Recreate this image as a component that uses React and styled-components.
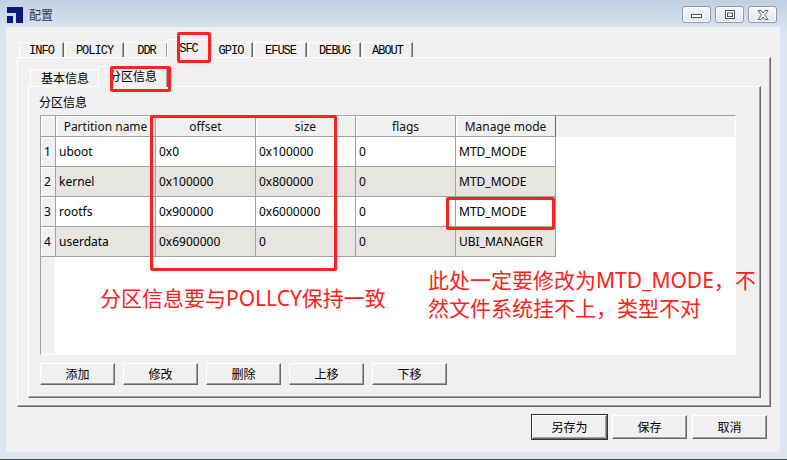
import styled, { createGlobalStyle } from "styled-components";

const GlobalStyle = createGlobalStyle`
  html, body {
    margin: 0;
    padding: 0;
    background: #dbe6f2;
  }
  * {
    box-sizing: border-box;
  }
`;

const UI_FONT = `"Noto Sans", "Noto Sans CJK SC", sans-serif`;

const Window = styled.div`
  position: relative;
  width: 787px;
  height: 460px;
  display: flex;
  flex-direction: column;
  background: linear-gradient(to bottom, #c2d1e0 0px, #d6e2ee 27px, #dbe6f2 40px);
  border-bottom: 1px solid #4a4a4a;
  font-family: ${UI_FONT};
  font-size: 12px;
  color: #000;
`;

const TitleBar = styled.div`
  height: 27px;
  flex: none;
  display: flex;
  align-items: center;
  padding: 2px 10px 0 7px;
  gap: 6px;
`;

const Title = styled.div`
  flex: 1;
  font-size: 12px;
  color: #2a3a4c;
`;

const CaptionButtons = styled.div`
  display: flex;
  gap: 4px;
`;

const CaptionButton = styled.div`
  width: 29px;
  height: 17px;
  border: 1px solid #8c9bb0;
  border-radius: 3px;
  background: linear-gradient(to bottom, #f5f8fb, #dfe7f0);
  display: flex;
  align-items: center;
  justify-content: center;
  box-shadow: inset 0 0 0 1px rgba(255, 255, 255, 0.7);
`;

const Client = styled.div`
  flex: 1;
  margin: 0 7px 7px 6px;
  background: #f0f0f0;
  display: flex;
  flex-direction: column;
  padding: 12px 9px 0 11px;
`;

const TabStrip = styled.div`
  height: 18px;
  display: flex;
  align-items: flex-end;
  padding-left: 2px;
  position: relative;
  z-index: 1;
`;

const OuterTab = styled.div`
  width: ${(p) => p.$w}px;
  height: ${(p) => (p.$active ? 19 : 15)}px;
  margin-bottom: ${(p) => (p.$active ? -1 : 0)}px;
  margin-left: ${(p) => (p.$active ? -2 : 0)}px;
  margin-right: ${(p) => (p.$active ? -1 : 1)}px;
  background: #f0f0f0;
  border-top: 1px solid #fff;
  border-left: 1px solid #fff;
  border-right: 1px solid #696969;
  box-shadow: inset -1px 0 0 #a0a0a0;
  display: flex;
  align-items: center;
  justify-content: center;
  padding-top: ${(p) => (p.$active ? 0 : 1)}px;
  font-family: "Liberation Mono", monospace;
  font-size: 12px;
  letter-spacing: -1px;
  color: #000;
`;

const OuterPanel = styled.div`
  height: 350px;
  background: #f0f0f0;
  border-top: 1px solid #fff;
  border-left: 1px solid #fff;
  border-right: 1px solid #696969;
  border-bottom: 1px solid #696969;
  box-shadow: inset -1px -1px 0 #a0a0a0;
  padding: 7px 9px 0 10px;
  display: flex;
  flex-direction: column;
`;

const InnerTabStrip = styled.div`
  height: 21px;
  display: flex;
  align-items: flex-end;
  padding-left: 2px;
  position: relative;
  z-index: 1;
`;

const InnerTab = styled.div`
  width: ${(p) => p.$w}px;
  height: ${(p) => (p.$active ? 21 : 17)}px;
  margin-bottom: ${(p) => (p.$active ? -1 : 0)}px;
  margin-left: ${(p) => (p.$active ? -2 : 0)}px;
  background: #f0f0f0;
  border-top: 1px solid #fff;
  border-left: 1px solid #fff;
  border-right: 1px solid #696969;
  box-shadow: inset -1px 0 0 #a0a0a0;
  display: flex;
  align-items: center;
  justify-content: center;
  padding-bottom: ${(p) => (p.$active ? 2 : 0)}px;
  font-size: 12px;
`;

const InnerPanel = styled.div`
  height: 312px;
  background: #f0f0f0;
  border-top: 1px solid #fff;
  border-left: 1px solid #fff;
  border-right: 1px solid #696969;
  border-bottom: 1px solid #696969;
  box-shadow: inset -1px -1px 0 #a0a0a0;
  padding: 8px 24px 0 11px;
  display: flex;
  flex-direction: column;
`;

const GroupLabel = styled.div`
  height: 16px;
  line-height: 16px;
  margin: 0 0 4px -1px;
  font-size: 12px;
`;

const Table = styled.div`
  height: 240px;
  border-top: 1px solid #a0a0a0;
  border-left: 1px solid #a0a0a0;
  border-right: 1px solid #fff;
  border-bottom: 1px solid #fff;
  background: linear-gradient(to right, #f0f0f0 14px, #fff 14px);
  display: flex;
  flex-direction: column;
`;

const Row = styled.div`
  display: grid;
  grid-template-columns: 15px 100px 100px 100px 100px 100px 1fr;
  height: ${(p) => (p.$header ? 21 : 30)}px;
  background: ${(p) => (p.$header ? "#f0f0f0" : "transparent")};
`;

const HeadCell = styled.div`
  border-right: 1px solid ${(p) => (p.$last ? "#696969" : "#a0a0a0")};
  border-bottom: 1px solid #a0a0a0;
  box-shadow: inset 1px 1px 0 #fff;
  display: flex;
  align-items: center;
  justify-content: center;
  font-size: 12px;
  color: #111;
  white-space: nowrap;
`;

const RowHead = styled.div`
  background: #f0f0f0;
  border-right: 1px solid #a0a0a0;
  border-bottom: 1px solid #a0a0a0;
  box-shadow: inset 1px 1px 0 #fff;
  display: flex;
  align-items: center;
  padding-left: 3px;
  font-size: 12px;
`;

const Cell = styled.div`
  background: ${(p) => (p.$alt ? "#e7e5e1" : "#fff")};
  border-right: 1px solid #a0a0a0;
  border-bottom: 1px solid #a0a0a0;
  display: flex;
  align-items: center;
  padding-left: 3px;
  font-size: 12px;
  white-space: nowrap;
`;

const ButtonRow = styled.div`
  display: flex;
  gap: ${(p) => p.$gap}px;
  margin-top: 8px;
  justify-content: ${(p) => (p.$right ? "flex-end" : "flex-start")};
  padding-right: ${(p) => (p.$right ? 4 : 0)}px;
`;

const Button = styled.div`
  width: ${(p) => p.$w}px;
  height: ${(p) => p.$h}px;
  background: #f0f0f0;
  border-top: 1px solid #fff;
  border-left: 1px solid #fff;
  border-right: 1px solid #696969;
  border-bottom: 1px solid #696969;
  box-shadow: inset -1px -1px 0 #a0a0a0;
  outline: ${(p) => (p.$default ? "1px solid #333" : "none")};
  outline-offset: 0;
  display: flex;
  align-items: center;
  justify-content: center;
  font-size: 12px;
`;

const RedBox = styled.div`
  position: absolute;
  left: ${(p) => p.$x}px;
  top: ${(p) => p.$y}px;
  width: ${(p) => p.$w}px;
  height: ${(p) => p.$h}px;
  border: 3px solid #ff2020;
  border-radius: 2px;
  pointer-events: none;
  z-index: 5;
`;

const Note = styled.div`
  position: absolute;
  left: ${(p) => p.$x}px;
  top: ${(p) => p.$y}px;
  font-family: "Noto Sans", "Noto Sans CJK SC", sans-serif;
  font-size: 21px;
  line-height: 28px;
  color: #ff2020;
  white-space: nowrap;
  z-index: 5;
`;

const outerTabs = [
  { name: "INFO", w: 45 },
  { name: "POLICY", w: 59 },
  { name: "DDR", w: 43 },
  { name: "SFC", w: 43, active: true },
  { name: "GPIO", w: 44 },
  { name: "EFUSE", w: 53 },
  { name: "DEBUG", w: 53 },
  { name: "ABOUT", w: 51 },
];

const partitions = [
  { name: "uboot", offset: "0x0", size: "0x100000", flags: "0", mode: "MTD_MODE" },
  { name: "kernel", offset: "0x100000", size: "0x800000", flags: "0", mode: "MTD_MODE" },
  { name: "rootfs", offset: "0x900000", size: "0x6000000", flags: "0", mode: "MTD_MODE" },
  { name: "userdata", offset: "0x6900000", size: "0", flags: "0", mode: "UBI_MANAGER" },
];

const AppIcon = () => (
  <svg width="16" height="16" viewBox="0 0 16 16">
    <rect x="0" y="0" width="16" height="6" fill="#0a1a7a" />
    <rect x="9" y="0" width="7" height="16" fill="#0a1a7a" />
    <rect x="0" y="9" width="6" height="7" fill="#0a1a7a" />
  </svg>
);

const MinIcon = () => (
  <svg width="11" height="8" viewBox="0 0 11 8">
    <rect x="0.5" y="3.5" width="10" height="3" fill="#fff" stroke="#4a5566" />
  </svg>
);

const MaxIcon = () => (
  <svg width="10" height="9" viewBox="0 0 10 9">
    <rect x="0.5" y="0.5" width="9" height="8" fill="#fff" stroke="#4a5566" />
    <rect x="2.5" y="3" width="5" height="3.5" fill="none" stroke="#4a5566" />
  </svg>
);

const CloseIcon = () => (
  <svg width="12" height="10" viewBox="0 0 12 10">
    <path
      d="M1 0.5 L4 0.5 L6 3 L8 0.5 L11 0.5 L7.6 5 L11 9.5 L8 9.5 L6 7 L4 9.5 L1 9.5 L4.4 5 Z"
      fill="#fff"
      stroke="#4a5566"
      strokeWidth="0.9"
      strokeLinejoin="round"
    />
  </svg>
);

const App = () => {
  return (
    <>
      <GlobalStyle />
      <Window>
        <TitleBar>
          <AppIcon />
          <Title>配置</Title>
          <CaptionButtons>
            <CaptionButton>
              <MinIcon />
            </CaptionButton>
            <CaptionButton>
              <MaxIcon />
            </CaptionButton>
            <CaptionButton>
              <CloseIcon />
            </CaptionButton>
          </CaptionButtons>
        </TitleBar>

        <Client>
          <TabStrip>
            {outerTabs.map((t) => (
              <OuterTab key={t.name} $w={t.w} $active={t.active}>
                {t.name}
              </OuterTab>
            ))}
          </TabStrip>

          <OuterPanel>
            <InnerTabStrip>
              <InnerTab $w={70}>基本信息</InnerTab>
              <InnerTab $w={70} $active>
                分区信息
              </InnerTab>
            </InnerTabStrip>

            <InnerPanel>
              <GroupLabel>分区信息</GroupLabel>
              <Table>
                <Row $header>
                  <HeadCell />
                  <HeadCell>Partition name</HeadCell>
                  <HeadCell>offset</HeadCell>
                  <HeadCell>size</HeadCell>
                  <HeadCell>flags</HeadCell>
                  <HeadCell $last>Manage mode</HeadCell>
                  <div />
                </Row>
                {partitions.map((p, i) => {
                  const alt = i % 2 === 1;
                  return (
                    <Row key={p.name}>
                      <RowHead>{i + 1}</RowHead>
                      <Cell $alt={alt}>{p.name}</Cell>
                      <Cell $alt={alt}>{p.offset}</Cell>
                      <Cell $alt={alt}>{p.size}</Cell>
                      <Cell $alt={alt}>{p.flags}</Cell>
                      <Cell $alt={alt}>{p.mode}</Cell>
                      <div />
                    </Row>
                  );
                })}
              </Table>

              <ButtonRow $gap={8}>
                {["添加", "修改", "删除", "上移", "下移"].map((label) => (
                  <Button key={label} $w={75} $h={22}>
                    {label}
                  </Button>
                ))}
              </ButtonRow>
            </InnerPanel>
          </OuterPanel>

          <ButtonRow $gap={5} $right>
            <Button $w={75} $h={24} $default>
              另存为
            </Button>
            <Button $w={75} $h={24}>
              保存
            </Button>
            <Button $w={75} $h={24}>
              取消
            </Button>
          </ButtonRow>
        </Client>

        {/* red annotations drawn over the dialog */}
        <RedBox $x={177} $y={32} $w={34} $h={31} />
        <RedBox $x={110} $y={66} $w={61} $h={26} />
        <RedBox $x={150} $y={115} $w={187} $h={156} />
        <RedBox $x={446} $y={197} $w={109} $h={33} />

        <Note $x={100} $y={284}>
          分区信息要与POLLCY保持一致
        </Note>
        <Note $x={428} $y={266}>
          此处一定要修改为MTD_MODE，不
          <br />
          然文件系统挂不上，类型不对
        </Note>
      </Window>
    </>
  );
};

export default App;
